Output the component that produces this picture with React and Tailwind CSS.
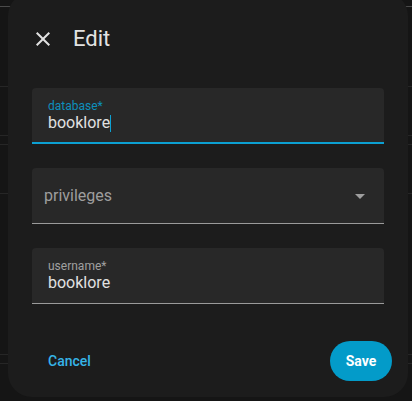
import React from 'react';

const App = () => {
    return (
        <div className="w-[412px] h-[401px] bg-[#151515] relative overflow-hidden" style={{ fontFamily: 'Roboto, "Noto Sans", sans-serif' }}>
            {/* page behind the scrim */}
            <div className="flex flex-col">
                <div className="h-[7px] border-b border-[#4a4a4a]"></div>
                <div className="h-[80px] border-b border-[#262626]"></div>
                <div className="h-[49px] border-b border-[#262626]"></div>
                <div className="h-[9px] border-b border-[#262626]"></div>
                <div className="h-[49px] border-b border-[#262626]"></div>
                <div className="h-[161px] border-b border-[#262626]"></div>
                <div className="h-[9px] border-b border-[#262626]"></div>
            </div>

            {/* Dialog */}
            <div className="absolute left-2 top-[-8px] w-[400px] h-[405px] rounded-[24px] bg-[#1c1c1c] flex flex-col px-6">
                <div className="flex items-center h-[46px] mt-6 -ml-[1px]">
                    <svg width="24" height="24" viewBox="0 0 24 24" fill="#e1e1e1">
                        <path d="M19 6.41 17.59 5 12 10.59 6.41 5 5 6.41 10.59 12 5 17.59 6.41 19 12 13.41 17.59 19 19 17.59 13.41 12z" />
                    </svg>
                    <span className="ml-[18px] text-[22px] leading-7 text-[#e3e3e3]">Edit</span>
                </div>

                <div className="mt-[26px] h-[56px] bg-[#282828] rounded-t-[4px] border-b-2 border-[#0ca0d2] px-4 pt-[10px] flex flex-col">
                    <span className="text-[12px] leading-4 text-[#0e8fbc]">database*</span>
                    <span className="text-[16px] leading-[18px] text-[#e1e1e1] flex items-center">
                        booklore<span className="inline-block w-[1px] h-[17px] bg-[#0ca0d2]"></span>
                    </span>
                </div>

                <div className="mt-6 h-[56px] bg-[#282828] rounded-t-[4px] border-b border-[#9a9a9a] px-3 flex items-center justify-between">
                    <span className="text-[16px] leading-6 text-[#9e9e9e]">privileges</span>
                    <svg width="24" height="24" viewBox="0 0 24 24" fill="#9e9e9e">
                        <path d="M7 10l5 5 5-5z" />
                    </svg>
                </div>

                <div className="mt-6 h-[56px] bg-[#282828] rounded-t-[4px] border-b border-[#9a9a9a] px-4 pt-[10px] flex flex-col">
                    <span className="text-[12px] leading-4 text-[#a0a0a0]">username*</span>
                    <span className="text-[16px] leading-[18px] text-[#e1e1e1]">booklore</span>
                </div>

                <div className="flex items-center justify-between mt-[37px] -mr-2">
                    <button className="px-4 h-10 text-[14px] font-medium text-[#36b4e8]">Cancel</button>
                    <button className="w-[62px] h-10 rounded-full bg-[#039bc9] text-[14px] font-bold text-white">Save</button>
                </div>
            </div>
        </div>
    );
};

export default App;
